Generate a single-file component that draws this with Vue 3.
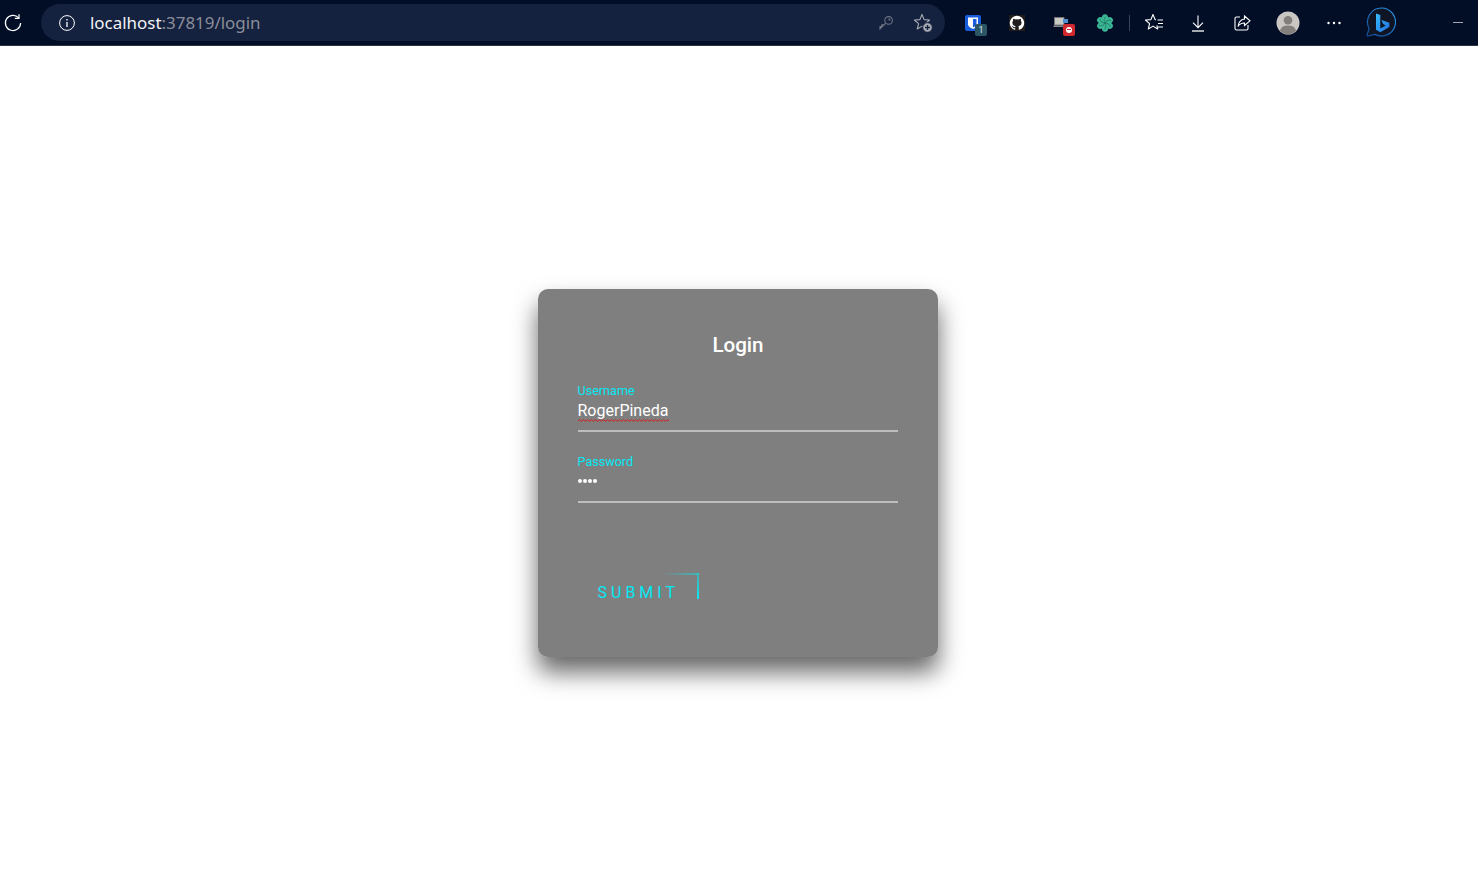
<script setup>
const username = 'RogerPineda'
const petals = [0, 60, 120, 180, 240, 300]
</script>

<template>
  <div class="page">
    <header class="toolbar">
      <button class="reload" aria-label="Reload">
        <svg width="20" height="20" viewBox="0 0 20 20" fill="none" stroke="#fff" stroke-width="1.2">
          <path d="M15.6 4.8A7.6 7.6 0 1 0 17.6 10" />
          <path d="M16 1.2v4.2h-4.2" />
        </svg>
      </button>

      <div class="address">
        <svg class="info" width="18" height="18" viewBox="0 0 18 18" fill="none" stroke="#fff" stroke-width="1">
          <circle cx="9" cy="9" r="7.4" />
          <path d="M9 8v5" stroke-width="1.3" />
          <path d="M9 5v1.4" stroke-width="1.3" />
        </svg>
        <span class="url">localhost<span class="url-rest">:37819/login</span></span>
        <div class="address-end">
          <svg width="16" height="16" viewBox="0 0 16 16" fill="none" stroke="#6f7482" stroke-width="1.1">
            <circle cx="10.6" cy="5.4" r="3.8" />
            <path d="M7.8 8.2 2 14v-2.4h1.8V9.8h1.8" />
            <circle cx="11.4" cy="4.6" r=".5" />
          </svg>
          <svg width="20" height="20" viewBox="0 0 20 20" fill="none" stroke="#a8abb3" stroke-width="1.1">
            <path d="M9 1.500 11.100 6.600 16.600 7 12.400 10.600 13.700 16 9 13.100 4.300 16 5.600 10.600 1.400 7 6.900 6.600z" stroke-linejoin="round" />
            <circle cx="14.500" cy="14.500" r="4.800" fill="#a8abb3" stroke="#14213f" stroke-width="1" />
            <path d="M14.500 12v5M12 14.500h5" stroke="#14213f" stroke-width="1.300" />
          </svg>
        </div>
      </div>

      <div class="extensions">
        <div class="ext ext-bitwarden">
          <svg width="16" height="16" viewBox="0 0 16 16">
            <rect width="16" height="16" rx="2" fill="#175ddc" />
            <path d="M3 2.500h10v6.500c0 2.500-2.800 4-5 5-2.200-1-5-2.500-5-5z" fill="#fff" />
            <path d="M8 4v8.500c1.600-.8 3.500-1.900 3.500-3.700V4z" fill="#175ddc" />
          </svg>
          <span class="ext-badge">1</span>
        </div>
        <div class="ext ext-github">
          <svg width="16" height="16" viewBox="0 0 16 16">
            <rect width="16" height="16" fill="#211d1d" />
            <path fill="#fff" d="M8 .8a7.200 7.200 0 0 0-2.300 14.030c.36.060.49-.16.49-.35v-1.230c-2 .43-2.420-.96-2.420-.96-.33-.84-.8-1.060-.8-1.060-.66-.44.050-.43.050-.43.720.05 1.100.74 1.100.74.640 1.100 1.680.78 2.100.6.060-.47.250-.78.450-.96-1.600-.18-3.280-.8-3.280-3.560 0-.78.280-1.430.74-1.940-.07-.18-.32-.91.070-1.890 0 0 .6-.19 1.980.74a6.900 6.900 0 0 1 3.600 0c1.380-.93 1.980-.74 1.980-.74.390.98.140 1.710.07 1.890.46.510.74 1.160.74 1.940 0 2.760-1.680 3.380-3.290 3.560.26.220.49.670.49 1.330v1.970c0 .19.130.41.500.35A7.200 7.200 0 0 0 8 .8z" />
          </svg>
        </div>
        <div class="ext ext-block">
          <svg width="16" height="14" viewBox="0 0 16 14">
            <rect x="1.500" y="1.500" width="9.500" height="7.500" fill="#c9c9c4" stroke="#77777a" stroke-width=".8" />
            <rect x="10" y="3" width="5" height="4" fill="#4f8fd0" />
            <rect x=".5" y="9.500" width="11" height="1.500" fill="#8b8b8d" />
          </svg>
          <span class="stop-badge"><i></i></span>
        </div>
        <div class="ext ext-gpt">
          <svg width="18" height="18" viewBox="0 0 18 18">
            <ellipse
              v-for="angle in petals"
              :key="angle"
              cx="9"
              cy="4.800"
              rx="3.300"
              ry="4.500"
              fill="#3ab795"
              :transform="`rotate(${angle} 9 9)`"
            />
            <g fill="none" stroke="#1a6b58" stroke-width=".7">
              <path
                v-for="angle in petals"
                :key="angle"
                d="M9 9 C7.500 7 7.800 4 9.800 2.500"
                :transform="`rotate(${angle} 9 9)`"
              />
            </g>
          </svg>
        </div>
      </div>

      <span class="divider"></span>

      <div class="tools">
        <svg width="20" height="20" viewBox="0 0 20 20" fill="none" stroke="#fff" stroke-width="1.100">
          <path d="M12 6.800 11.100 6.600 9 1.500 6.900 6.600 1.400 7 5.600 10.600 4.300 16 9 13.100 13.700 16 12.900 12.400" stroke-linejoin="round" />
          <path d="M13.500 7h5.500M14 10.500h5M14 14h5" />
        </svg>
        <svg width="20" height="20" viewBox="0 0 20 20" fill="none" stroke="#fff" stroke-width="1.100">
          <path d="M10 2.500v12M5 9.700l5 5 5-5" />
          <path d="M4 18h12" stroke-width="1.300" />
        </svg>
        <svg width="20" height="20" viewBox="0 0 20 20" fill="none" stroke="#fff" stroke-width="1.100">
          <path d="M8 4H4.500a1.500 1.500 0 0 0-1.500 1.500v10A1.500 1.500 0 0 0 4.500 17h10a1.500 1.500 0 0 0 1.500-1.500V12" />
          <path d="M12.500 3 18 7.800l-5.500 4.700V10c-3 0-5 1-6.500 3.500C6.500 9.500 9 6.500 12.500 6z" />
        </svg>
        <span class="avatar">
          <svg width="24" height="24" viewBox="0 0 24 24">
            <circle cx="12" cy="12" r="11.500" fill="#c9c6c3" />
            <circle cx="12" cy="9.300" r="4.300" fill="#837f7c" />
            <path d="M4 20c1-4.500 4.500-5.500 8-5.500s7 1 8 5.500a11.500 11.500 0 0 1-16 0z" fill="#837f7c" />
          </svg>
        </span>
        <svg width="20" height="20" viewBox="0 0 20 20" fill="#fff">
          <circle cx="4.500" cy="10" r="1.200" />
          <circle cx="10" cy="10" r="1.200" />
          <circle cx="15.500" cy="10" r="1.200" />
        </svg>
      </div>

      <svg class="bing" width="30" height="30" viewBox="0 0 30 30" fill="none">
        <defs>
          <linearGradient id="bing-b" x1="0" y1="0" x2="1" y2="1">
            <stop offset="0" stop-color="#37bdff" />
            <stop offset="1" stop-color="#1e6fe0" />
          </linearGradient>
          <linearGradient id="bing-ring" x1="1" y1="0" x2="0" y2="1">
            <stop offset="0" stop-color="#2a9df4" />
            <stop offset="1" stop-color="#124a94" />
          </linearGradient>
        </defs>
        <path d="M15.500 1a14 14 0 1 1-6.500 26.400L2 29c-.7.200-1.100-.3-.9-1l2-6.500A14 14 0 0 1 15.500 1z" fill="#0f1524" stroke="url(#bing-ring)" stroke-width="1.200" />
        <path d="M10 6.500l4.300 1.500v13.500l5.500-3.100-2.700-1.300-1.700-4.200 8 2.800v4.200l-9.100 5.300-4.300-2.400z" fill="url(#bing-b)" />
      </svg>

      <span class="minimize"></span>
    </header>

    <main class="content">
      <section class="login-box">
        <h2>Login</h2>

        <div class="field">
          <label>Username</label>
          <div class="value">
            <span class="typed">
              {{ username }}
              <svg class="squiggle" width="91" height="3" viewBox="0 0 91 3">
                <defs>
                  <pattern id="wave" width="4" height="3" patternUnits="userSpaceOnUse">
                    <path d="M0 2.200 1 .8 2 .8 3 2.200 4 2.200" fill="none" stroke="#c62828" stroke-width="1" />
                  </pattern>
                </defs>
                <rect width="91" height="3" fill="url(#wave)" />
              </svg>
            </span>
          </div>
        </div>

        <div class="field">
          <label>Password</label>
          <div class="value dots">
            <i></i><i></i><i></i><i></i>
          </div>
        </div>

        <a class="submit">
          Submit
          <span class="line-top"></span>
          <span class="line-right"></span>
        </a>
      </section>
    </main>
  </div>
</template>

<style>
html, body {
  margin: 0;
  background: #fff;
}
</style>

<style scoped>
.page {
  height: 877px;
  overflow: hidden;
  background: #fff;
  font-family: Roboto, "Liberation Sans", sans-serif;
}

.toolbar {
  height: 45px;
  display: flex;
  align-items: center;
  background: #020d26;
  border-bottom: 1px solid #2c3444;
}

.reload {
  width: 20px;
  height: 20px;
  margin-left: 3px;
  padding: 0;
  border: 0;
  background: none;
  display: flex;
}

.address {
  width: 904px;
  height: 37px;
  margin-left: 18px;
  padding: 0 12px 0 17px;
  box-sizing: border-box;
  border-radius: 18.500px;
  background: #14213f;
  display: flex;
  align-items: center;
}

.info {
  flex: none;
}

.url {
  margin-left: 14px;
  font-family: "Noto Sans", sans-serif;
  font-size: 16.930px;
  color: #f2f3f5;
}

.url-rest {
  color: #8a8e98;
}

.address-end {
  margin-left: auto;
  display: flex;
  align-items: center;
  gap: 19px;
}

.extensions {
  display: flex;
  align-items: center;
  margin-left: 20px;
}

.ext {
  position: relative;
  width: 16px;
  height: 16px;
  margin-right: 28px;
  display: flex;
  align-items: center;
}

.ext-gpt {
  margin-right: 0;
  justify-content: center;
}

.ext-gpt svg {
  flex: none;
}

.ext-badge {
  position: absolute;
  left: 10px;
  top: 9px;
  width: 12px;
  height: 12px;
  border-radius: 2px;
  background: #2c5566;
  color: #dfe7ea;
  font-size: 9px;
  line-height: 12px;
  text-align: center;
}

.stop-badge {
  position: absolute;
  left: 10px;
  top: 9px;
  width: 12px;
  height: 12px;
  border-radius: 2px;
  background: #d3282d;
  display: flex;
  align-items: center;
  justify-content: center;
}

.stop-badge i {
  width: 6px;
  height: 6px;
  border-radius: 50%;
  background: #fff;
  position: relative;
}

.stop-badge i::after {
  content: "";
  position: absolute;
  left: 1px;
  right: 1px;
  top: 2.500px;
  height: 1px;
  background: #d3282d;
}

.divider {
  width: 1px;
  height: 16px;
  margin-left: 16px;
  background: #3b4456;
}

.tools {
  display: flex;
  align-items: center;
  gap: 24px;
  margin-left: 14px;
}

.avatar {
  width: 24px;
  height: 24px;
  display: flex;
}

.bing {
  margin-left: 22px;
  margin-top: -1px;
}

.minimize {
  width: 10px;
  height: 1px;
  margin-left: 57px;
  background: #a6aab3;
}

.content {
  display: flex;
  justify-content: center;
  padding: 243px 2px 0 0;
}

.login-box {
  width: 400px;
  height: 368px;
  padding: 40px;
  box-sizing: border-box;
  border-radius: 10px;
  background: rgba(0, 0, 0, 0.5);
  box-shadow: 0 15px 25px rgba(0, 0, 0, 0.6);
}

h2 {
  margin: 0 0 23px;
  font-size: 20.600px;
  font-weight: 500;
  line-height: 32px;
  color: #fff;
  text-align: center;
}

.field {
  height: 46px;
  margin-bottom: 23px;
  border-bottom: 2px solid #bdbdbd;
}

label {
  display: block;
  margin-left: -0.500px;
  font-size: 12.600px;
  line-height: 14px;
  color: #03e9f4;
}

.value {
  margin-top: 3px;
  margin-left: -0.500px;
  font-size: 16px;
  line-height: 19px;
  color: #fff;
}

.typed {
  position: relative;
  display: inline-block;
}

.squiggle {
  position: absolute;
  left: 0;
  top: 18px;
}

.dots {
  height: 17px;
  display: flex;
  align-items: center;
  gap: 1.300px;
}

.dots i {
  width: 4px;
  height: 4px;
  border-radius: 50%;
  background: #fff;
}

.submit {
  position: relative;
  display: block;
  width: 121px;
  height: 26px;
  margin-top: 70px;
  padding: 0 0 0 19.500px;
  box-sizing: border-box;
  font-size: 16px;
  line-height: 40px;
  letter-spacing: 4px;
  text-transform: uppercase;
  color: #03e9f4;
}

.line-top {
  position: absolute;
  right: 0;
  top: 0;
  width: 35px;
  height: 2px;
  background: linear-gradient(90deg, transparent, rgba(3, 233, 244, 0.5));
}

.line-right {
  position: absolute;
  right: 0;
  top: 0;
  width: 2px;
  height: 26px;
  background: linear-gradient(180deg, rgba(3, 233, 244, 0.4), #03e9f4);
}
</style>
